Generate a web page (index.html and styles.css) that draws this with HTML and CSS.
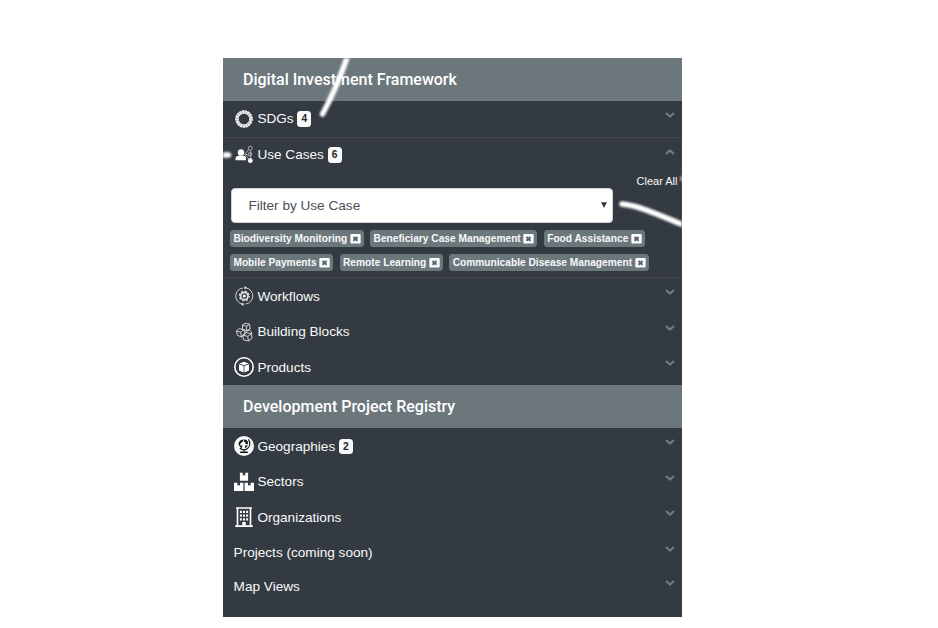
FILE: index.html
```html
<!DOCTYPE html>
<html lang="en">
<head>
<meta charset="utf-8">
<title>Filters</title>
<link rel="stylesheet" href="styles.css">
</head>
<body>
<svg class="defs" width="0" height="0" aria-hidden="true">
  <symbol id="down" viewBox="0 0 10 8"><path d="M1 2l4 3.500L9 2" fill="none" stroke="currentColor" stroke-width="2.2"/></symbol>
  <symbol id="up" viewBox="0 0 10 8"><path d="M1 6l4-3.500L9 6" fill="none" stroke="currentColor" stroke-width="2.2"/></symbol>
  <symbol id="close" viewBox="0 0 11 10"><rect x=".3" width="10.4" height="9.6" rx="1" fill="#f8f9fa"/><path d="M3.500 2.900l4 3.800M7.500 2.900L3.500 6.700" stroke="#59636a" stroke-width="2"/></symbol>
</svg>
<nav class="sidebar">
  <h2 class="head">Digital Investment Framework</h2>
  <div class="row raised">
    <svg class="icon" viewBox="0 0 20 20"><circle cx="10" cy="10" r="7" fill="none" stroke="#aeb2b4" stroke-width="3.400"/><circle cx="10" cy="10" r="7" fill="none" stroke="#f1f2f2" stroke-width="3.400" stroke-dasharray="1.600 .987"/></svg>
    <span>SDGs</span><b class="count">4</b><svg class="chev"><use href="#down"/></svg>
  </div>
  <section class="open">
    <div class="row raised">
      <svg class="icon" viewBox="0 0 20 20"><circle cx="7" cy="7.400" r="3.200" fill="#fff"/><path d="M1.500 15.200v-1.400c0-2 1.800-3.200 5.300-3.200s5.300 1.200 5.300 3.200v1.400z" fill="#fff"/><g fill="none" stroke="#b4b8ba" stroke-width=".9"><path d="M10.500 9.600l4.200-5M10.500 9.800h4.200M11 10l5 5M16.600 5.200v9"/><circle cx="16.300" cy="3.200" r="2"/><circle cx="16" cy="9.300" r="1.800"/></g><circle cx="16.300" cy="15.700" r="2.400" fill="#fff"/></svg>
      <span>Use Cases</span><b class="count">6</b><svg class="chev"><use href="#up"/></svg>
    </div>
    <div class="clear">Clear All</div>
    <div class="select"><span>Filter by Use Case</span><svg class="arrow" viewBox="0 0 6 6"><path d="M0 .3h6L3 6z" fill="#343a40"/></svg></div>
    <div class="tags first">
      <span class="tag">Biodiversity Monitoring<svg><use href="#close"/></svg></span>
      <span class="tag">Beneficiary Case Management<svg><use href="#close"/></svg></span>
      <span class="tag">Food Assistance<svg><use href="#close"/></svg></span>
    </div>
    <div class="tags">
      <span class="tag">Mobile Payments<svg><use href="#close"/></svg></span>
      <span class="tag">Remote Learning<svg><use href="#close"/></svg></span>
      <span class="tag">Communicable Disease Management<svg><use href="#close"/></svg></span>
    </div>
  </section>
  <div class="row">
    <svg class="icon" viewBox="0 0 20 20"><g fill="none" stroke="#e0e2e3"><path d="M8.900 2a8.100 8.100 0 0 0-.6 16M11.700 18a8.100 8.100 0 0 0 .5-16" stroke-width=".9"/><circle cx="10.300" cy="10" r="3.700" stroke-width="1.700"/><circle cx="10.300" cy="10" r="4.900" stroke-width="1.200" stroke-dasharray="1.900 1.948"/></g><circle cx="10.300" cy="10" r="1.600" fill="#fff"/><path d="M10.500.2v3L13 1.800zM9.500 16.800v3L7 18.300z" fill="#fff"/></svg>
    <span>Workflows</span><svg class="chev"><use href="#down"/></svg>
  </div>
  <div class="row short">
    <svg class="icon" viewBox="0 0 20 20"><g fill="none" stroke="#dcdee0" stroke-width=".9" stroke-linejoin="round"><path d="M8.500 3l2.500-1.700 4.500.8.700 5-3.800 1.600-3.900-1.100zM8.500 3l4.200 1.200 2.800-2.100M12.700 4.200l-.3 4.500M2.300 9l3-2.300 4.700.8 1.200 4.500-3.500 3-4.200-1.600zM2.300 9l4.200 1.200L10 7.500M6.500 10.200l1 4.800M11.500 9.300l4-1.200 2 1.800v3M8.700 13.200l3.300-2.700 5.500 1.200.4 4.800-3.400 2.500-5-1.200zM8.700 13.200l5 1.100 3.800-2.600M13.700 14.300l.8 4.700"/></g></svg>
    <span>Building Blocks</span><svg class="chev"><use href="#down"/></svg>
  </div>
  <div class="row">
    <svg class="icon" viewBox="0 0 20 20"><circle cx="10" cy="10" r="9.200" fill="none" stroke="#fff" stroke-width="1.600"/><path d="M10 4.800l4.600 1.700L10 8.300 5.400 6.500zM5 7.200l4.600 1.900v6.400L5 13.500zM15 7.200l-4.600 1.900v6.400l4.600-2z" fill="#fff"/></svg>
    <span>Products</span><svg class="chev"><use href="#down"/></svg>
  </div>
  <h2 class="head">Development Project Registry</h2>
  <div class="row">
    <svg class="icon" viewBox="0 0 20 20"><circle cx="10" cy="10" r="10" fill="#f8f9fa"/><path d="M14.300 3.400c2.600 3.200 1.800 7.300-1.200 9.300-2.300 1.500-5.200 1.200-7.300-.4M10 13.500v2.300" fill="none" stroke="#111" stroke-width="1.100"/><path d="M4.600 8.500c0-2.600 1.500-4.400 3.700-5l1 .5-.9 1.900-1.700 1-.3 1.600-1 1.400zM10.300 3.300c2 .3 3.500 1.700 4 3.400l-1.100 1.800-1.600-.6-.3-1.600-1.600-1zM5.500 9.300l2.900.2-.6 2.900c-1.200-.7-2-1.700-2.300-3.100zM11.300 9.400l2.300-.2c-.4 1.500-1.300 2.400-2.800 2.900zM6.500 15.500h7l.6 1.500H5.900z" fill="#111"/></svg>
    <span>Geographies</span><b class="count">2</b><svg class="chev"><use href="#down"/></svg>
  </div>
  <div class="row short">
    <svg class="icon" viewBox="0 0 20 20"><path d="M5.900.7h2.900v3L10 3.100l1.200.6v-3h2.900v8.100H5.900zM0 10.700h3.400v3l1.300-.6 1.300.6v-3h3.400V19H0zM10.600 10.700H14v3l1.300-.6 1.300.6v-3H20V19h-9.400z" fill="#fff"/></svg>
    <span>Sectors</span><svg class="chev"><use href="#down"/></svg>
  </div>
  <div class="row">
    <svg class="icon" viewBox="0 0 20 20"><path d="M2 1h16M1.200 19.100h17.600" stroke="#fff" stroke-width="1.700"/><path d="M3.500 1v18M16.500 1v18" stroke="#fff" stroke-width="1.600"/><path d="M5.900 3.800h2V6h-2zM9 3.800h2V6H9zM12.100 3.800h2V6h-2zM5.900 7.500h2v2.200h-2zM9 7.500h2v2.200H9zM12.100 7.500h2v2.200h-2zM5.900 11.200h2v2.200h-2zM9 11.200h2v2.200H9zM12.100 11.200h2v2.200h-2zM8.300 15h3.400v4.500H8.300z" fill="#fff"/></svg>
    <span>Organizations</span><svg class="chev"><use href="#down"/></svg>
  </div>
  <div class="row short plain"><span>Projects (coming soon)</span><svg class="chev"><use href="#down"/></svg></div>
  <div class="row last plain"><span>Map Views</span><svg class="chev"><use href="#down"/></svg></div>
  <svg class="marks" viewBox="0 0 459 559" aria-hidden="true">
    <g fill="none" stroke="#fff" stroke-linecap="round">
      <path d="M125-3C117 20 109 39 99.500 56" stroke-width="5.500"/>
      <path d="M-3 97h8.500" stroke-width="5.500"/>
      <path d="M399 146c19 2 39 12 64 22" stroke-width="5.500"/>
      <path d="M460.500 120.500v.5" stroke-width="6"/>
    </g>
  </svg>
</nav>
</body>
</html>
```
FILE: styles.css
```css
* { box-sizing: border-box; }
body {
  margin: 0;
  padding: 58px 0 0 223px;
  background: #fff;
  font-family: "Liberation Sans", Arial, sans-serif;
}
.defs { position: absolute; }
.sidebar {
  position: relative;
  width: 459px;
  height: 559px;
  overflow: hidden;
  background: #343a41;
  color: #f8f9fa;
}
.head {
  display: flex;
  align-items: center;
  height: 43px;
  margin: 0;
  padding-left: 20px;
  background: #6c777c;
  color: #fff;
  font: 500 16px/20px Roboto, sans-serif;
}
.row {
  display: flex;
  align-items: center;
  height: 36px;
  padding: 0 7px 0 11px;
  font-size: 13.6px;
}
.row.raised { padding-bottom: 1px; }
.row.short { height: 35px; }
.row.last { height: 33px; }
.row.plain { padding-left: 10.6px; }
.icon { width: 20px; height: 20px; margin-right: 3.4px; flex: none; }
.count {
  width: 14px;
  height: 15.5px;
  margin: 1px 0 0 3.7px;
  border-radius: 3.5px;
  background: #f8f9fa;
  color: #212529;
  font-size: 10.2px;
  line-height: 15px;
  text-align: center;
}
.chev {
  width: 10px;
  height: 8px;
  margin: 0 0 8px auto;
  color: #727c83;
}
.open {
  height: 141px;
  border: 1px solid #454749;
  border-left: 0;
}
.open .row { height: 34px; }
.open .chev { margin-bottom: 6px; margin-right: -.5px; }
.clear {
  height: 16px;
  padding: 3px 3.5px 0 0;
  font-size: 11px;
  line-height: 13px;
  text-align: right;
}
.select {
  display: flex;
  align-items: center;
  justify-content: space-between;
  width: 382px;
  height: 35px;
  margin-left: 8px;
  padding: 0 5px 0 16.4px;
  border: 1px solid #ced4da;
  border-radius: 4px;
  background: #fff;
  color: #495057;
  font-size: 13.6px;
}
.arrow { width: 6px; height: 6px; margin-bottom: 1px; }
.tags { display: flex; gap: 6.5px; margin: 7px 0 0 7px; }
.tag {
  display: flex;
  align-items: center;
  height: 17px;
  padding: 0 3px 0 3.4px;
  border-radius: 3.5px;
  background: #6c777c;
  color: #f8f9fa;
  font-size: 10.2px;
  font-weight: bold;
  white-space: nowrap;
}
.tag svg { width: 11px; height: 10px; margin-left: 2.5px; }
.marks {
  position: absolute;
  inset: 0;
  width: 459px;
  height: 559px;
  filter: blur(.8px);
}
```
